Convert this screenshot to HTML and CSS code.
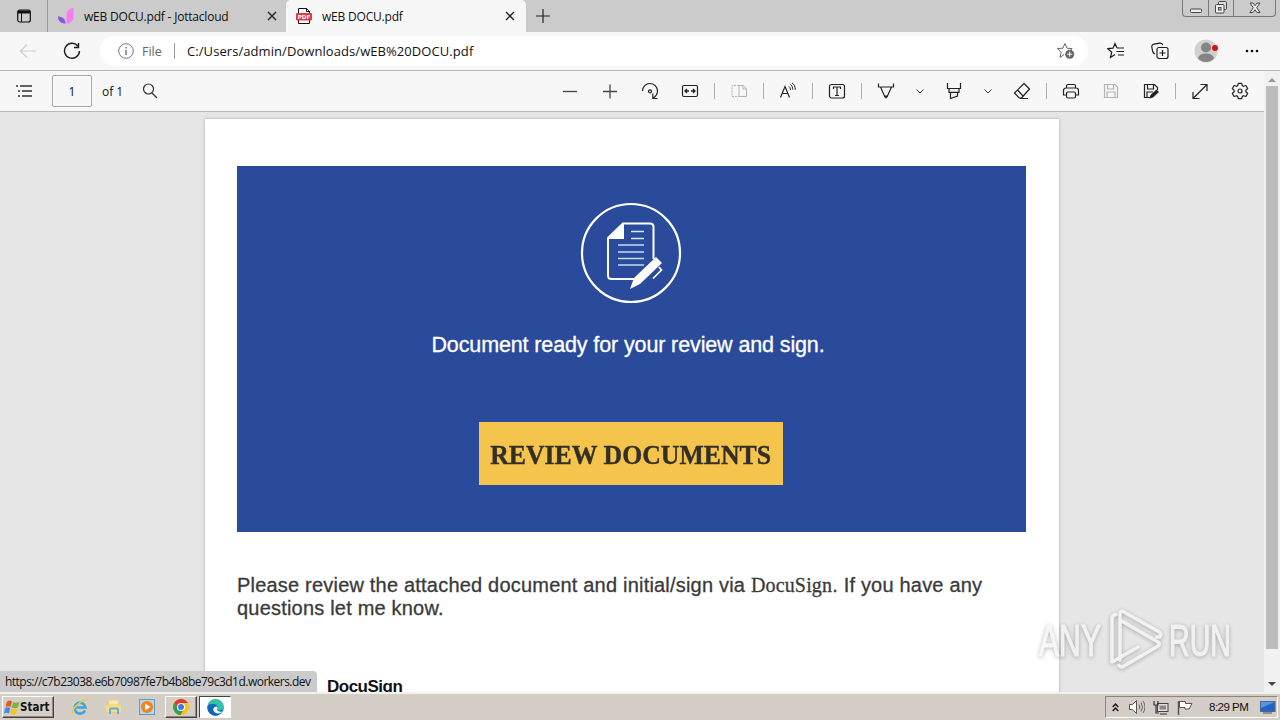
FILE: index.html
```html
<!DOCTYPE html>
<html lang="en">
<head>
    <meta charset="UTF-8">
    <title>wEB DOCU.pdf</title>
    <link rel="stylesheet" href="styles.css">
</head>
<body>
    <div class="tabs">
        <svg class="tab-menu" width="16" height="16" viewBox="0 0 16 16"><rect x="1.7" y="2" width="12.6" height="12" rx="2" fill="none" stroke="#111" stroke-width="1.2"/><path d="M2 2.5h12v3H2z" fill="#111"/><path d="M5.5 5v9" stroke="#111"/></svg>
        <div class="tab">
            <svg width="16" height="16" viewBox="0 0 16 16"><path d="M8.500 15.500V7c0-4 3-7 6-7 1 0 1 1 1 2v7c0 4-3 6.500-7 6.500z" fill="#f77df0"/><path d="M0 8.500c4 0 7.500 2 7.500 7C3 15.500 0 13 0 8.500z" fill="#8a58d8"/></svg>
            <span class="tab-title t1">wEB DOCU.pdf - Jottacloud</span>
            <svg class="close" width="10" height="10" viewBox="0 0 10 10"><path d="M1 1l8 8M9 1L1 9" stroke="#222" stroke-width="1.4"/></svg>
        </div>
        <div class="tab active">
            <svg width="16" height="16" viewBox="0 0 16 16"><path d="M2.500 15.500V.500h8l3 3v12z" fill="#fff" stroke="#111"/><path d="M10.500.500v3h3" fill="none" stroke="#111"/><rect x="0" y="5" width="16" height="7.500" rx="1" fill="#e03c42"/><text x="8" y="11.200" class="pdf-label" text-anchor="middle">PDF</text></svg>
            <span class="tab-title t2">wEB DOCU.pdf</span>
            <svg class="close" width="10" height="10" viewBox="0 0 10 10"><path d="M1 1l8 8M9 1L1 9" stroke="#222" stroke-width="1.4"/></svg>
        </div>
        <svg class="new-tab" width="14" height="14" viewBox="0 0 14 14"><path d="M7 0v14M0 7h14" stroke="#222" stroke-width="1.2"/></svg>
        <div class="win-buttons">
            <div class="win-btn"><svg width="14" height="14" viewBox="0 0 14 14"><rect x="1.500" y="8" width="11" height="3.500" rx="1" fill="#eee" stroke="#444"/></svg></div>
            <div class="win-btn"><svg width="14" height="14" viewBox="0 0 14 14"><rect x="4.500" y=".5" width="8" height="8" rx="1" fill="#ddd" stroke="#444"/><rect x="1.500" y="3.500" width="8.500" height="8.500" rx="1" fill="#eee" stroke="#444"/><rect x="4.500" y="6.500" width="2.500" height="2.500" fill="#ccc" stroke="#444"/></svg></div>
            <div class="win-btn wide"><svg width="14" height="14" viewBox="0 0 14 14"><path d="M2 2h3l2 2.700L9 2h3L8.700 6.700 12 11.500H9L7 8.800 5 11.500H2l3.300-4.800z" fill="#eee" stroke="#444"/></svg></div>
        </div>
    </div>

    <div class="address-bar">
        <svg class="back" width="18" height="16" viewBox="0 0 18 16"><path d="M17 8H2M8 1.500L1.500 8 8 14.500" fill="none" stroke="#cfcfcf" stroke-width="1.2"/></svg>
        <svg class="refresh" width="18" height="18" viewBox="0 0 18 18"><path d="M14.800 4A7.500 7.500 0 1 0 16.500 9M15.500 1v4.500H11" fill="none" stroke="#1b1b1b" stroke-width="1.4"/></svg>
        <div class="url-box">
            <svg width="16" height="16" viewBox="0 0 16 16"><circle cx="8" cy="8" r="7.300" fill="none" stroke="#777"/><path d="M8 7v5M8 4v1.500" stroke="#666" stroke-width="1.300"/></svg>
            <span class="scheme">File</span>
            <span class="url-sep"></span>
            <span class="url">C:/Users/admin/Downloads/wEB%20DOCU.pdf</span>
            <svg class="add-fav" width="18" height="18" viewBox="0 0 18 18"><path d="M8 1.500l2 4.700 5.200.4L13 8.500M7 12.500l-4 3 1.200-5.200-3.700-3.700 5.300-.4L8 1.500" fill="none" stroke="#666"/><circle cx="12.700" cy="12.200" r="4.500" fill="#666"/><path d="M12.700 9.700v5M10.200 12.200h5" stroke="#fff"/></svg>
        </div>
        <svg class="favs" width="18" height="18" viewBox="0 0 18 18"><path d="M10 6L8 1.500 6 6.200.8 6.600l3.900 3.600-1.200 5.300 4.500-3M10 6h7M9.500 9.500H17M11 13h6" fill="none" stroke="#1b1b1b" stroke-width="1.200"/></svg>
        <svg class="collections" width="18" height="18" viewBox="0 0 18 18"><path d="M4 12c-1.500-.5-2-1.500-2.300-2.500L.8 5C.6 3.500 1.500 2.500 3 2.200l5.500-1c1.800-.3 3 .5 3.300 2" fill="none" stroke="#1b1b1b" stroke-width="1.200"/><rect x="6" y="5.500" width="11" height="11" rx="2" fill="#f7f7f7" stroke="#1b1b1b" stroke-width="1.200"/><path d="M11.500 8v6M8.500 11h6" stroke="#1b1b1b" stroke-width="1.200"/></svg>
        <svg class="avatar" width="24" height="24" viewBox="0 0 24 24"><circle cx="12" cy="12" r="11.500" fill="#d2d0cc"/><circle cx="12" cy="8.500" r="5" fill="#858585"/><path d="M4 19.500c1-4 4-5 8-5s7 1 8 5c-4 4.500-12 4.500-16 0z" fill="#858585"/><circle cx="21" cy="9" r="3" fill="#d90e18"/></svg>
        <svg class="more" width="14" height="4" viewBox="0 0 14 4"><circle cx="2" cy="2" r="1.300"/><circle cx="7" cy="2" r="1.300"/><circle cx="12" cy="2" r="1.300"/></svg>
    </div>

    <div class="content">
        <div class="reader">
            <div class="pdf-toolbar">
                <svg class="contents" width="16" height="14" viewBox="0 0 16 14"><path d="M0 2h2M4 2h12M2 7h2M6 7h10M2 12h2M6 12h10" stroke="#333" stroke-width="1.300"/></svg>
                <div class="page-input">1</div>
                <span class="page-count">of 1</span>
                <svg width="16" height="16" viewBox="0 0 16 16"><circle cx="6.500" cy="6" r="5" fill="none" stroke="#333" stroke-width="1.200"/><path d="M10 10l5 5" stroke="#333" stroke-width="1.300"/></svg>
                <div class="tools">
                    <div class="tool"><svg viewBox="0 0 18 18"><path d="M2 9.500h14" stroke="#444" stroke-width="1.300"/></svg></div>
                    <div class="tool"><svg viewBox="0 0 18 18"><path d="M2 9.500h14M9 2.500v14" stroke="#444" stroke-width="1.300"/></svg></div>
                    <div class="tool"><svg viewBox="0 0 18 18"><path d="M1.500 9A7.500 7.500 0 0 1 16.500 9c0 3-1.500 5-4 7M11.800 11.500v5h4.700" fill="none" stroke="#222" stroke-width="1.200"/><circle cx="9" cy="9.300" r="1.500" fill="none" stroke="#222" stroke-width="1.200"/></svg></div>
                    <div class="tool"><svg viewBox="0 0 18 18"><rect x="1.500" y="3.500" width="15" height="11" rx="1.500" fill="none" stroke="#222" stroke-width="1.200"/><path d="M4 9h4M10 9h4M6 7L4 9l2 2M12 7l2 2-2 2" fill="none" stroke="#222" stroke-width="1.300"/></svg></div>
                    <span class="sep"></span>
                    <div class="tool"><svg viewBox="0 0 18 18"><path d="M9 3.500H2v11h7" fill="none" stroke="#b5b5b5" stroke-dasharray="2 1"/><path d="M9 3.500h4.500l3 3.500v7.500H9zM13 3.500V7h3.500" fill="none" stroke="#b5b5b5"/></svg></div>
                    <span class="sep"></span>
                    <div class="tool"><svg viewBox="0 0 18 18"><path d="M1.500 15.500L6 4.500l4.500 11M3 11.500h6" fill="none" stroke="#222" stroke-width="1.200"/><path d="M10 4.500c1 .8 1.500 2 1.500 3.500M11.500 2.500c1.500 1.200 2.300 3 2.300 5.200M13 .8c2.300 1.700 3.300 4 3.300 7" fill="none" stroke="#222"/></svg></div>
                    <span class="sep"></span>
                    <div class="tool"><svg viewBox="0 0 18 18"><rect x="1.500" y="2.500" width="15" height="13.500" rx="2" fill="none" stroke="#222" stroke-width="1.200"/><path d="M5.500 7V5h7v2M9 5v8.500M7 13.500h4" fill="none" stroke="#222" stroke-width="1.200"/></svg></div>
                    <span class="sep"></span>
                    <div class="tool"><svg viewBox="0 0 18 18"><path d="M1.500 1.500V5h15V1.500M3.500 5l4.500 10h2l4.500-10" fill="none" stroke="#222" stroke-width="1.200"/><path d="M7.200 13.500h3.600L9 17z" fill="#222"/></svg></div>
                    <div class="chev"><svg width="8" height="5" viewBox="0 0 8 5"><path d="M.500.500L4 4 7.500.500" fill="none" stroke="#333"/></svg></div>
                    <div class="tool"><svg viewBox="0 0 18 18"><path d="M2.500 1v5.500h13V1M4 6.500v3.800h10V6.500M5.500 10.500v6l7-2.500v-3.500" fill="none" stroke="#222" stroke-width="1.200"/></svg></div>
                    <div class="chev"><svg width="8" height="5" viewBox="0 0 8 5"><path d="M.500.500L4 4 7.500.500" fill="none" stroke="#333"/></svg></div>
                    <div class="tool"><svg viewBox="0 0 18 18"><path d="M11 1.500l5.500 5.500-8 9H6.300L1.500 11zM4.500 8l5.500 6M7 16.500h8" fill="none" stroke="#222" stroke-width="1.200" stroke-linejoin="round"/></svg></div>
                    <span class="sep"></span>
                    <div class="tool"><svg viewBox="0 0 18 18"><path d="M4.500 6V4c0-1 .5-1.500 1.500-1.500h6c1 0 1.500.5 1.500 1.500v2M4.500 13H1.500V8.500C1.500 7 2.500 6 4 6h10c1.500 0 2.500 1 2.500 2.500V13h-3" fill="none" stroke="#222" stroke-width="1.200"/><rect x="4.500" y="10" width="9" height="6" rx="1.500" fill="none" stroke="#222" stroke-width="1.200"/></svg></div>
                    <div class="tool"><svg viewBox="0 0 18 18"><path d="M2.500 2.500h10.500l2.500 2.500v10.500h-13zM5.500 2.500V7h6V2.500M5 15.500v-5.500h8v5.500" fill="none" stroke="#b5b5b5" stroke-width="1.200"/></svg></div>
                    <div class="tool"><svg viewBox="0 0 18 18"><path d="M8 15.500H2.500v-13h10l3 3V8M5.500 2.500V7h6V2.500M5 15.500v-5.500h6" fill="none" stroke="#222" stroke-width="1.200"/><path d="M7.500 16.500l1-3.500 6-5.500 2.500 2.500-6 5.500z" fill="#222"/></svg></div>
                    <span class="sep"></span>
                    <div class="tool"><svg viewBox="0 0 18 18"><path d="M2.500 16L15.500 3M9.500 2.500H16V9M2 10v6.500h6.500" fill="none" stroke="#222" stroke-width="1.200"/></svg></div>
                    <div class="tool"><svg viewBox="0 0 18 18"><path d="M7.300 1.300h3.400l.6 2.300 1.300.7 2.300-.8 1.800 3-1.800 1.700v1.600l1.800 1.700-1.800 3-2.300-.8-1.300.7-.6 2.300H7.300l-.6-2.300-1.300-.7-2.300.8-1.800-3 1.800-1.700V8.200L1.300 6.500l1.800-3 2.300.8 1.300-.7z" fill="none" stroke="#222" stroke-width="1.200" stroke-linejoin="round"/><circle cx="9" cy="9" r="2" fill="none" stroke="#222" stroke-width="1.200"/></svg></div>
                </div>
            </div>

            <div class="viewer">
                <div class="page">
                    <div class="banner">
                        <svg class="doc-icon" width="102" height="102" viewBox="0 0 102 102">
                            <circle cx="51" cy="51" r="49" fill="none" stroke="#fff" stroke-width="2.200"/>
                            <path d="M54 77H31.500q-3.500 0-3.500-3.500V36L43 21.500h27q3.500 0 3.500 3.500v32" fill="none" stroke="#fff" stroke-width="2"/>
                            <path d="M28 37L44 21v16z" fill="#fff"/>
                            <path d="M51 29.500h13M51 36.500h13" stroke="#dbe8ff" stroke-width="1.300"/>
                            <path d="M38 43h26M38 50h26M38 56.500h26M38 63h26" stroke="#c3dcf8" stroke-width="1.700"/>
                            <path d="M50 87l4-11 22-21 6 6-22 21z" fill="#fff"/>
                            <path d="M79 65l2.500 3-8.500 8.500" fill="none" stroke="#fff" stroke-width="1.700"/>
                        </svg>
                        <p class="ready">Document ready for your review and sign.</p>
                        <div class="review-btn"><span>REVIEW DOCUMENTS</span></div>
                    </div>
                    <p class="message"><span class="m1">Please review the attached document and initial/sign via</span> <span class="serif">DocuSign</span><span class="m2">. If you have any</span><br><span class="m3">questions let me know.</span></p>
                    <div class="brand">DocuSign</div>
                </div>
                <div class="status">https://c7b23038.e6b70987fe7b4b8be79c3d1d.workers.dev</div>
            </div>
        </div>
        <div class="scrollbar">
            <svg width="8" height="4" viewBox="0 0 8 4"><path d="M0 4l4-4 4 4z" fill="#999"/></svg>
            <div class="thumb"></div>
            <svg class="down" width="8" height="4" viewBox="0 0 8 4"><path d="M0 0h8L4 4z" fill="#444"/></svg>
        </div>
    </div>

    <div class="taskbar">
        <div class="start">
            <svg width="16" height="15" viewBox="0 0 16 15"><path d="M3 1.500c2-1.500 3-1.500 5 0L6.500 7C5 6 3.500 6 1.500 7z" fill="#e65a28"/><path d="M9 2c2 1 3.500 1 6.500 0L14 7.500c-2 1-4 1-6.500 0z" fill="#7cb642"/><path d="M1.200 8c2-1 3.500-1 5 0L5 13.500c-1.500-1-3-1-5 0z" fill="#3d8ee0"/><path d="M7.200 8.500c2 1 4 1 6.500 0L12 14c-2 1-4 1-6 0z" fill="#f6c32c"/></svg>
            <span>Start</span>
        </div>
        <svg class="ie" width="18" height="18" viewBox="0 0 18 18"><path d="M14 12.500A5.500 5.500 0 1 1 14.500 9.500H5" fill="none" stroke="#3da5df" stroke-width="2.600"/><path d="M2 16C-1 12 11 1 16.500 2" fill="none" stroke="#ecc84b" stroke-width="1.500"/></svg>
        <svg class="folder" width="16" height="16" viewBox="0 0 16 16"><path d="M1 3h5l1 1.500h7V14H1z" fill="#eccb62"/><path d="M3 1.500h9v4H3z" fill="#fae9a0"/><path d="M0 6h15v7H0z" fill="#f3dd88"/><path d="M4 15v-4.500q0-1 1-1h6q1 0 1 1V15" fill="none" stroke="#66aed6" stroke-width="2"/></svg>
        <svg class="media" width="16" height="16" viewBox="0 0 16 16"><rect x=".5" y=".5" width="15" height="15" fill="#b8d5ea" stroke="#609cc8"/><circle cx="8" cy="8" r="6" fill="#f1841c"/><path d="M6 4.500l5.500 3.500L6 11.500z" fill="#fff"/></svg>
        <div class="task chrome"><svg width="16" height="16" viewBox="0 0 16 16"><circle cx="8" cy="8" r="8" fill="#fbc21a"/><path d="M1.100 4A8 8 0 0 1 15 4H8L5 10z" fill="#e13b31"/><path d="M1.100 4A8 8 0 0 0 7.500 16L11 10H5z" fill="#2ea04f"/><circle cx="8" cy="8" r="4" fill="#fff"/><circle cx="8" cy="8" r="3" fill="#3c78e0"/></svg></div>
        <div class="task current"><svg width="17" height="17" viewBox="0 0 16 16"><circle cx="8" cy="8" r="7.800" fill="#137ac8"/><path d="M.5 7C1.500-2 15-2 15.800 7c0 4-5 4-6 2.500 1-1.500 0-4.500-3-4.500C4 4.800 1.500 5.500.5 7z" fill="#35c1a7"/><path d="M.500 7C2 4 7.500 4 9 7c-3 0-4 2.500-2.500 5 1.500 2.300 5 2.500 7 1-3 4-10 3.500-12-1.500-.7-1.500-1-3-1-4.500z" fill="#1169b5"/><path d="M9 7c-3 0-4 3-2 5.300 2 1.900 5.500 1.700 8-.8-2 1-5.500.500-5.500-2 .8-.6.500-1.700-.5-2.500z" fill="#e9f6fb"/></svg></div>
        <div class="tray">
            <svg class="up" width="7" height="9" viewBox="0 0 7 9"><path d="M.7 4L3.500 1l2.800 3M.7 8l2.800-3 2.800 3" fill="none" stroke="#111" stroke-width="1.300"/></svg>
            <svg class="sound" width="16" height="14" viewBox="0 0 16 14"><path d="M.5 4.500h3L7.500.500v13l-4-4h-3z" fill="#fff" stroke="#555"/><path d="M10 4.500q1.500 2.500 0 5M12 2.500q3 4.500 0 9M14 1q4 6 0 12" fill="none" stroke="#666"/></svg>
            <svg class="net" width="16" height="15" viewBox="0 0 16 15"><rect x="4.500" y="3.500" width="10.500" height="8" fill="#ddd" stroke="#444"/><rect x="6.500" y="5.500" width="6.500" height="4" fill="#888"/><path d="M7 14h7M1 1v4h4V1M3 5v8h3" fill="none" stroke="#333" stroke-width="1.200"/></svg>
            <svg class="flag" width="16" height="15" viewBox="0 0 16 15"><path d="M1.500 15V1" stroke="#555" stroke-width="1.500"/><path d="M2.500 1.500h6v2h6.500L12 9H8V7.500H2.500z" fill="#fff" stroke="#555"/></svg>
            <span class="clock">8:29 PM</span>
            <svg class="desktop" width="16" height="13" viewBox="0 0 16 13"><rect x=".5" y=".5" width="14.500" height="10" fill="#2463c4" stroke="#4b6690"/><path d="M1 1h14L1 7z" fill="#5595e8"/><path d="M3 12h9" stroke="#555"/></svg>
        </div>
    </div>

    <svg class="watermark" width="210" height="76" viewBox="0 0 210 76">
        <g class="wm-text">
            <text x="2" y="50" textLength="62" lengthAdjust="spacingAndGlyphs">ANY</text>
            <text x="132" y="50" textLength="62" lengthAdjust="spacingAndGlyphs">RUN</text>
        </g>
        <path d="M75 56V13q0-4 4-4.500M83 54V8q0-4 4-2l34.500 19.500q4 2.500 1 5.500h-3M83 14l38 22q2.500 2 0 4L87 60q-3 2-5-.5M75 56l26-15" fill="none" stroke="#f6f6f6" stroke-width="3.500" stroke-linecap="round" stroke-linejoin="round"/>
    </svg>
</body>
</html>
```
FILE: styles.css
```css
* { box-sizing: border-box; }
body {
    margin: 0;
    width: 1280px;
    height: 720px;
    overflow: hidden;
    display: flex;
    flex-direction: column;
    position: relative;
    font-family: "Open Sans", "Noto Sans", sans-serif;
    color: #111;
}
svg { display: block; flex: none; }
p { margin: 0; }
span { white-space: nowrap; }

/* tabs */
.tabs {
    height: 32px;
    flex: none;
    display: flex;
    align-items: center;
    background: #cbcbcb;
}
.tab-menu { margin: 0 15px 0 16px; }
.tab {
    height: 32px;
    width: 239px;
    display: flex;
    align-items: center;
    padding: 0 9px 0 10px;
    border-left: 1px solid #999;
    font-size: 12px;
}
.tab.active {
    width: 240px;
    padding-right: 11px;
    background: #f7f7f7;
    border-left: none;
    border-radius: 5px 5px 0 0;
}
.tab-title { margin-left: 10px; letter-spacing: -0.2px; }
.close { margin-left: auto; }
.new-tab { margin-left: 10px; }
.win-buttons {
    display: flex;
    align-self: flex-start;
    margin-left: auto;
    margin-right: 4px;
    height: 17px;
    border: 1px solid #777;
    border-top: none;
    border-radius: 0 0 4px 4px;
}
.win-btn {
    width: 25px;
    display: flex;
    justify-content: center;
    align-items: center;
}
.win-btn + .win-btn { border-left: 1px solid #777; }
.win-btn.wide { width: 42px; }

/* address bar */
.address-bar {
    height: 39px;
    flex: none;
    display: flex;
    align-items: center;
    background: #f7f7f7;
    border-bottom: 1px solid #b5b5b5;
}
.back { margin-left: 19px; }
.refresh { margin-left: 26px; }
.url-box {
    width: 988px;
    height: 30px;
    margin-left: 19px;
    padding: 0 13px 0 18px;
    border-radius: 15px;
    background: #fff;
    display: flex;
    align-items: center;
    font-size: 13px;
}
.scheme { margin-left: 8px; width: 32px; color: #666; font-size: 12.5px; }
.url-sep { width: 1px; height: 16px; background: #999; margin-right: 12px; }
.url { letter-spacing: 0.07px; }
.add-fav { margin-left: auto; }
.favs { margin-left: 19px; }
.collections { margin-left: 26px; }
.avatar { margin-left: 25px; }
.more { margin-left: 27px; }

/* pdf reader */
.content { height: 621px; flex: none; display: flex; }
.reader { width: 1264px; display: flex; flex-direction: column; }
.pdf-toolbar {
    height: 41px;
    flex: none;
    display: flex;
    align-items: center;
    padding: 0 4px 0 16px;
    background: #f7f7f7;
    border-bottom: 1px solid #b9b9b9;
    font-size: 12px;
}
.page-input {
    width: 40px;
    height: 32px;
    margin-left: 20px;
    border: 1px solid #aaa;
    border-radius: 2px;
    text-align: center;
    line-height: 31px;
}
.page-count { margin-left: 10px; width: 40px; }
.tools { margin-left: auto; display: flex; align-items: center; }
.tool { width: 40px; display: flex; justify-content: center; }
.tool svg { width: 18px; height: 18px; }
.chev { width: 28px; display: flex; justify-content: center; }
.sep { width: 1px; height: 16px; margin: 0 4px; background: #b0b0b0; }
.viewer {
    height: 580px;
    overflow: hidden;
    position: relative;
    background: #e6e6e6;
    padding-top: 7px;
}
.page {
    width: 854px;
    height: 800px;
    margin: 0 auto;
    padding: 47px 32px;
    background: #fff;
    box-shadow: 0 0 3px #aaa;
}
.banner {
    width: 789px;
    height: 366px;
    background: #2a4b9b;
    display: flex;
    flex-direction: column;
    align-items: center;
    padding: 36px 2px 0 0;
}
.ready {
    margin: 28px 5px 0 0;
    font: 21.5px/26px "Liberation Sans", Arial, sans-serif;
    letter-spacing: -0.12px;
    color: #fff;
    white-space: nowrap;
    -webkit-text-stroke: 0.3px #fff;
}
.review-btn {
    width: 304px;
    height: 63px;
    margin-top: 64px;
    background: #f5c44d;
    display: flex;
    align-items: center;
    justify-content: center;
    font: bold 28px/32px "Liberation Serif", serif;
    color: #332f26;
    -webkit-text-stroke: 0.4px #332f26;
}
.review-btn span { transform: scaleX(0.92); margin-top: 3px; }
.message {
    margin-top: 42px;
    font: 20px/23px "Liberation Sans", Arial, sans-serif;
    color: #3a3a3a;
    white-space: nowrap;
    letter-spacing: 0.2px;
    -webkit-text-stroke: 0.3px #3a3a3a;
}
.serif { font-family: "Liberation Serif", serif; letter-spacing: 0.15px; }
.brand {
    margin: 57px 0 0 90px;
    font: bold 17px/20px "Liberation Sans", Arial, sans-serif;
    letter-spacing: -0.5px;
}
.status {
    position: absolute;
    left: 0;
    bottom: 0;
    width: 317px;
    height: 21px;
    padding-left: 5px;
    background: #cbcbcb;
    border-radius: 0 4px 0 0;
    font-size: 12px;
    letter-spacing: -0.52px;
    line-height: 21px;
    white-space: nowrap;
}
.scrollbar {
    width: 16px;
    background: #f1f1f1;
    display: flex;
    flex-direction: column;
    align-items: center;
    padding: 7px 0 6px;
}
.thumb { width: 12px; height: 563px; margin-top: 4px; background: #bcbcbc; }
.down { margin-top: auto; }

/* taskbar */
.taskbar {
    height: 28px;
    flex: none;
    display: flex;
    align-items: center;
    padding: 0 2px;
    background: #d5cec6;
    border-top: 2px solid #f3f1ed;
}
.start, .task {
    height: 22px;
    display: flex;
    align-items: center;
    border: 1px solid;
    border-color: #fff #444 #444 #fff;
    box-shadow: inset -1px -1px 0 #8c8780;
}
.start {
    width: 52px;
    padding-left: 1px;
    font: bold 11.5px "DejaVu Sans Condensed", "DejaVu Sans", sans-serif;
}
.ie { margin-left: 17px; }
.folder { margin-left: 17px; }
.media { margin-left: 17px; }
.task { width: 32px; justify-content: center; }
.chrome { margin-left: 10px; }
.current { margin-left: 2px; background: #fff; border-color: #444 #fff #fff #444; box-shadow: none; }
.tray {
    width: 173px;
    height: 22px;
    margin-left: auto;
    padding-left: 6px;
    display: flex;
    align-items: center;
    border: 1px solid;
    border-color: #8a857d #fff #fff #8a857d;
}
.sound { margin-left: 10px; }
.net { margin-left: 8px; }
.flag { margin-left: 8px; }
.clock { margin-left: 16px; width: 39px; font: 11.5px "Liberation Sans", sans-serif; letter-spacing: -0.5px; }
.desktop { margin-left: 12px; }

.pdf-label { font: bold 5.5px "DejaVu Sans", sans-serif; fill: #fff; }
.watermark {
    position: absolute;
    left: 1037px;
    top: 606px;
    opacity: 0.8;
    filter: drop-shadow(0 1px 2px rgba(0,0,0,0.35));
}
.wm-text {
    font: 44px "Liberation Sans", sans-serif;
    fill: #f4f4f4;
    stroke: #f4f4f4;
    stroke-width: 1.2px;
}
```
